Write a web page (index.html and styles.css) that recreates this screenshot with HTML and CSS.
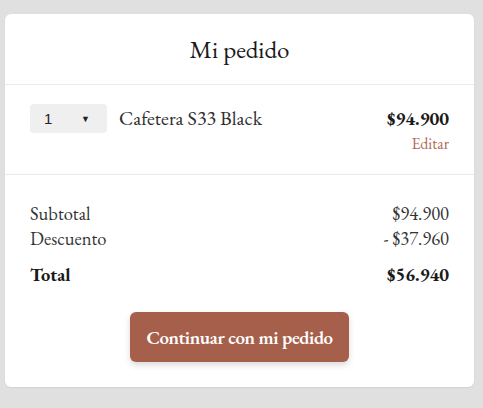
FILE: index.html
```html
<!DOCTYPE html>
<html lang="es">
<head>
<meta charset="utf-8">
<title>Mi pedido</title>
<link rel="stylesheet" href="styles.css">
</head>
<body>
<div class="card">
  <div class="card-header">
    <h1 class="title">Mi pedido</h1>
  </div>
  <div class="item">
    <div class="qty">
      <span class="qty-value">1</span>
      <span class="qty-arrow">▼</span>
    </div>
    <div class="item-name">Cafetera S33 Black</div>
    <div class="item-side">
      <div class="item-price">$94.900</div>
      <a class="edit" href="#">Editar</a>
    </div>
  </div>
  <div class="summary">
    <div class="row"><span>Subtotal</span><span>$94.900</span></div>
    <div class="row"><span>Descuento</span><span>- $37.960</span></div>
    <div class="row total"><span>Total</span><span>$56.940</span></div>
    <div class="actions">
      <button class="btn">Continuar con mi pedido</button>
    </div>
  </div>
</div>
</body>
</html>
```
FILE: styles.css
```css
html, body {
  margin: 0;
  padding: 0;
}
body {
  background: #e0e0e0;
  font-family: "EB Garamond", "Liberation Serif", serif;
  color: #222;
  padding: 14px 9px 22px 5px;
}
.card {
  background: #fff;
  border-radius: 6px;
  box-shadow: 0 1px 2px rgba(0,0,0,0.06);
}
.card-header {
  height: 71px;
  display: flex;
  align-items: center;
  justify-content: center;
  border-bottom: 1px solid #ebebeb;
  box-sizing: border-box;
}
.title {
  margin: 0;
  font-size: 25px;
  font-weight: 400;
  color: #1a1a1a;
}
.item {
  height: 90px;
  box-sizing: border-box;
  padding: 19px 25px 0 25px;
  display: flex;
  align-items: flex-start;
  border-bottom: 1px solid #ebebeb;
}
.qty {
  width: 77px;
  height: 29px;
  box-sizing: border-box;
  background: #efefef;
  border-radius: 4px;
  display: flex;
  align-items: center;
  padding: 0 17px 0 14px;
  justify-content: space-between;
  font-family: "Liberation Sans", Arial, sans-serif;
  font-size: 15px;
  color: #222;
}
.qty-arrow {
  font-size: 9px;
}
.item-name {
  margin-left: 12px;
  font-size: 20px;
  line-height: 29px;
  color: #2e2e2e;
  flex: 1;
}
.item-side {
  display: flex;
  flex-direction: column;
  align-items: flex-end;
}
.item-price {
  font-size: 18.5px;
  font-weight: 700;
  line-height: 29px;
  color: #1a1a1a;
}
.edit {
  font-size: 16px;
  color: #b06a55;
  text-decoration: none;
  line-height: 20px;
  margin-top: 1px;
}
.summary {
  padding: 26px 25px 25px 25px;
}
.row {
  display: flex;
  justify-content: space-between;
  font-size: 18.5px;
  line-height: 25px;
  color: #333;
}
.row.total {
  margin-top: 11px;
  font-weight: 700;
  color: #1a1a1a;
}
.actions {
  display: flex;
  justify-content: center;
  margin-top: 25px;
}
.btn {
  width: 219px;
  height: 50px;
  border: none;
  border-radius: 6px;
  background: #a65f4b;
  color: #fff;
  font-family: "EB Garamond", "Liberation Serif", serif;
  font-size: 19px;
  font-weight: 600;
  letter-spacing: -0.4px;
  box-shadow: 0 3px 6px rgba(0,0,0,0.15);
  cursor: pointer;
}
```
